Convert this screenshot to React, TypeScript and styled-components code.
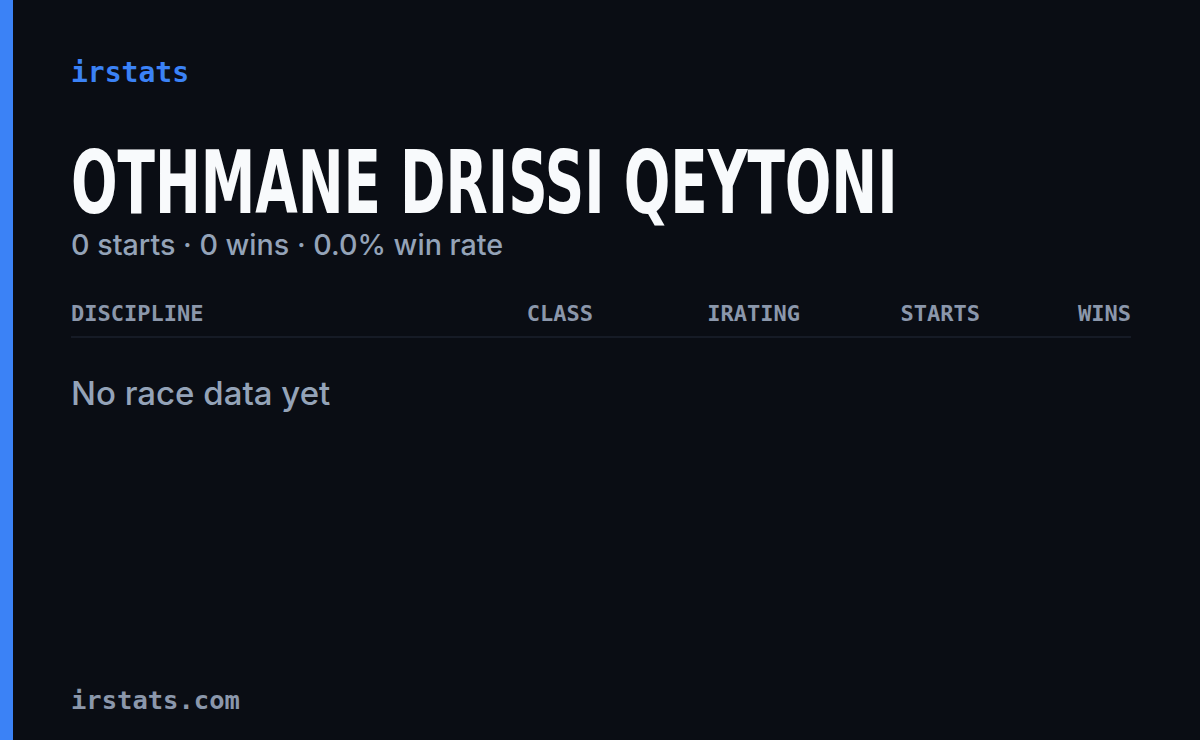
import styled, { createGlobalStyle } from "styled-components";

const GlobalStyle = createGlobalStyle`
  html, body {
    margin: 0;
    padding: 0;
    background: #0a0d14;
  }
  * {
    box-sizing: border-box;
  }
`;

const columns = [
  { key: "discipline", label: "DISCIPLINE", align: "left" },
  { key: "class", label: "CLASS", align: "right" },
  { key: "irating", label: "IRATING", align: "right" },
  { key: "starts", label: "STARTS", align: "right" },
  { key: "wins", label: "WINS", align: "right" },
] as const;

export default function App() {
  const starts = 0;
  const wins = 0;
  const rate = starts ? (wins / starts) * 100 : 0;

  return (
    <>
      <GlobalStyle />
      <Card>
        <Main>
          <Brand>irstats</Brand>
          <NameBlock>
            <Name>OTHMANE DRISSI QEYTONI</Name>
            <Summary>
              {starts} starts · {wins} wins · {rate.toFixed(1)}% win rate
            </Summary>
          </NameBlock>
          <Table>
            <HeadRow>
              {columns.map((col) => (
                <HeadCell key={col.key} $align={col.align}>
                  {col.label}
                </HeadCell>
              ))}
            </HeadRow>
            <Empty>No race data yet</Empty>
          </Table>
        </Main>
        <Footer>irstats.com</Footer>
      </Card>
    </>
  );
}

const Card = styled.div`
  width: 1200px;
  height: 740px;
  display: flex;
  flex-direction: column;
  justify-content: space-between;
  padding: 56px 69px 25px 58px;
  background: #0a0d14;
  border-left: 13px solid #3b82f6;
  overflow: hidden;
`;

const Main = styled.div`
  display: flex;
  flex-direction: column;
`;

const Brand = styled.div`
  font-family: "DejaVu Sans Mono", monospace;
  font-size: 28px;
  font-weight: 700;
  color: #3b82f6;
  line-height: 34px;
`;

const NameBlock = styled.div`
  margin-top: 51px;
  display: flex;
  flex-direction: column;
`;

const Name = styled.h1`
  margin: 0;
  font-family: "DejaVu Sans Condensed", "DejaVu Sans", sans-serif;
  font-stretch: condensed;
  font-size: 88px;
  font-weight: 700;
  line-height: 84px;
  color: #f8fafc;
  transform: scaleX(0.692);
  transform-origin: left center;
  white-space: nowrap;
`;

const Summary = styled.div`
  margin-top: 2px;
  font-family: Inter, "Noto Sans", sans-serif;
  font-size: 28.7px;
  font-weight: 500;
  color: #94a3b8;
  line-height: 36px;
`;

const Table = styled.div`
  margin-top: 37px;
  display: flex;
  flex-direction: column;
`;

const HeadRow = styled.div`
  display: grid;
  grid-template-columns: 1fr 120px 207px 180px 151px;
  padding-bottom: 8px;
  border-bottom: 2px solid #161b26;
`;

const HeadCell = styled.div<{ $align: "left" | "right" }>`
  font-family: "DejaVu Sans Mono", monospace;
  font-size: 22px;
  font-weight: 700;
  line-height: 28px;
  color: #8b97ab;
  text-align: ${(p) => p.$align};
`;

const Empty = styled.div`
  margin-top: 35px;
  font-family: Inter, "Noto Sans", sans-serif;
  font-size: 33px;
  font-weight: 500;
  color: #94a3b8;
`;

const Footer = styled.div`
  font-family: "DejaVu Sans Mono", monospace;
  font-size: 25.5px;
  font-weight: 700;
  color: #8b97ab;
`;
